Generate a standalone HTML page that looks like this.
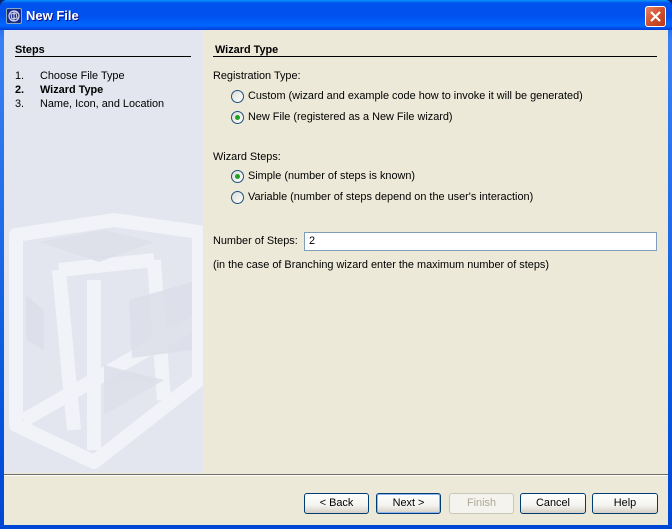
<!DOCTYPE html>
<html><head><meta charset="utf-8"><style>
*{margin:0;padding:0;box-sizing:border-box}
body{width:672px;height:529px;overflow:hidden;font-family:"Liberation Sans",Tahoma,sans-serif;font-size:10.9px;color:#000;background:#0a246a}
#win{position:absolute;left:0;top:0;width:672px;height:529px;background:linear-gradient(#0058ee,#3a81f3 8%,#0a5ae0 70%,#0046d5);border-radius:7px 7px 0 0}
#title{position:absolute;left:0;top:0;width:672px;height:30px;background:linear-gradient(#0997ff 0%,#0053ee 10%,#0050ee 50%,#0066ff 85%,#003dd7 100%);border-radius:7px 7px 0 0}
#title .t{position:absolute;left:26px;top:8px;color:#fff;font-weight:bold;font-size:13px;text-shadow:1px 1px #0f1089}
#icon{position:absolute;left:6px;top:8px;width:16px;height:16px;background:#1a2a8a;border:1px solid #8ab;border-radius:2px}
#close{position:absolute;left:645px;top:6px;width:21px;height:21px;background:linear-gradient(135deg,#e8856a,#d0502c 50%,#b83a1a);border:1px solid #fff;border-radius:3px}
#client{position:absolute;left:4px;top:30px;width:664px;height:495px;background:#ece9d8}
#left{position:absolute;left:0;top:0;width:199px;height:443px;background:#e3e6ef;overflow:hidden}
.abs{position:absolute;white-space:nowrap}
.b{font-weight:bold}
.hl{position:absolute;height:1px;background:#000}
.radio{position:absolute;width:13px;height:13px;border-radius:50%;border:1px solid #1c5180;background:linear-gradient(135deg,#dcdcd4,#fff)}
.radio.on::after{content:"";position:absolute;left:3px;top:3px;width:5px;height:5px;border-radius:50%;background:#21a121}
.btn{position:absolute;top:463px;height:21px;border:1px solid #003c74;border-radius:3px;background:linear-gradient(#fff,#f3f3ef 60%,#d6d0c5);text-align:center;line-height:19px}
.btn.def{box-shadow:inset 0 0 0 1px #8fb6f2}
.btn.dis{border-color:#c9c7ba;background:#f4f3ee;color:#aca899}
</style></head><body>
<div id="win">
<div id="title"><div id="icon"><svg width="14" height="14" viewBox="0 0 14 14"><circle cx="7" cy="7" r="5" fill="none" stroke="#dde" stroke-width="1.2"/><path d="M4 5 L9 4 L10 9 L5 10 Z M7 2 L7 12" fill="none" stroke="#dde" stroke-width="1"/></svg></div><div class="t">New File</div>
<div id="close"><svg width="19" height="19" viewBox="0 0 19 19"><path d="M5 5 L14 14 M14 5 L5 14" stroke="#fff" stroke-width="2.2"/></svg></div></div>
<div id="client">
<div id="left">
<svg class="abs" style="left:0;top:170px" width="199" height="273" viewBox="0 0 199 273">
<g fill="none" stroke="#f4f5f9" stroke-linejoin="round" opacity="0.9">
<polygon points="12,35 110,20 195,32 195,180 90,262 12,225" stroke-width="14"/>
<path d="M55,70 L150,60 M90,80 L90,250 M55,70 L70,230 M150,60 L160,200 M20,220 L195,120" stroke-width="14"/>
</g>
<g fill="#dcdfe9" opacity="0.8">
<polygon points="35,42 100,30 150,42 95,62"/>
<polygon points="125,100 188,82 188,150 128,158"/>
<polygon points="100,165 160,180 100,215"/>
<polygon points="22,95 40,110 40,150 22,140"/>
</g>
</svg>
<div class="abs b" style="left:11px;top:14px">Steps</div>
<div class="hl" style="left:11px;top:26px;width:176px"></div>
<div class="abs" style="left:11px;top:40px">1.</div><div class="abs" style="left:36px;top:40px">Choose File Type</div>
<div class="abs b" style="left:11px;top:54px">2.</div><div class="abs b" style="left:36px;top:54px">Wizard Type</div>
<div class="abs" style="left:11px;top:68px">3.</div><div class="abs" style="left:36px;top:68px">Name, Icon, and Location</div>
</div>
<div class="abs b" style="left:211px;top:14px">Wizard Type</div>
<div class="hl" style="left:209px;top:26px;width:444px"></div>
<div class="abs" style="left:209px;top:40px">Registration Type:</div>
<div class="radio" style="left:227px;top:60px"></div><div class="abs" style="left:244px;top:60px">Custom (wizard and example code how to invoke it will be generated)</div>
<div class="radio on" style="left:227px;top:81px"></div><div class="abs" style="left:244px;top:81px">New File (registered as a New File wizard)</div>
<div class="abs" style="left:209px;top:121px">Wizard Steps:</div>
<div class="radio on" style="left:227px;top:140px"></div><div class="abs" style="left:244px;top:140px">Simple (number of steps is known)</div>
<div class="radio" style="left:227px;top:161px"></div><div class="abs" style="left:244px;top:161px">Variable (number of steps depend on the user's interaction)</div>
<div class="abs" style="left:209px;top:205px">Number of Steps:</div>
<div class="abs" style="left:300px;top:202px;width:353px;height:19px;background:#fff;border:1px solid #7f9db9;padding:2px 4px">2</div>
<div class="abs" style="left:209px;top:229px">(in the case of Branching wizard enter the maximum number of steps)</div>
<div class="hl" style="left:0;top:444px;width:664px;background:#716f64"></div>
<div class="hl" style="left:0;top:445px;width:664px;background:#fff"></div>
<div class="btn" style="left:300px;width:65px">&lt; Back</div>
<div class="btn def" style="left:372px;width:65px">Next &gt;</div>
<div class="btn dis" style="left:445px;width:65px">Finish</div>
<div class="btn" style="left:516px;width:66px">Cancel</div>
<div class="btn" style="left:588px;width:66px">Help</div>
</div>
</div>
</body></html>
